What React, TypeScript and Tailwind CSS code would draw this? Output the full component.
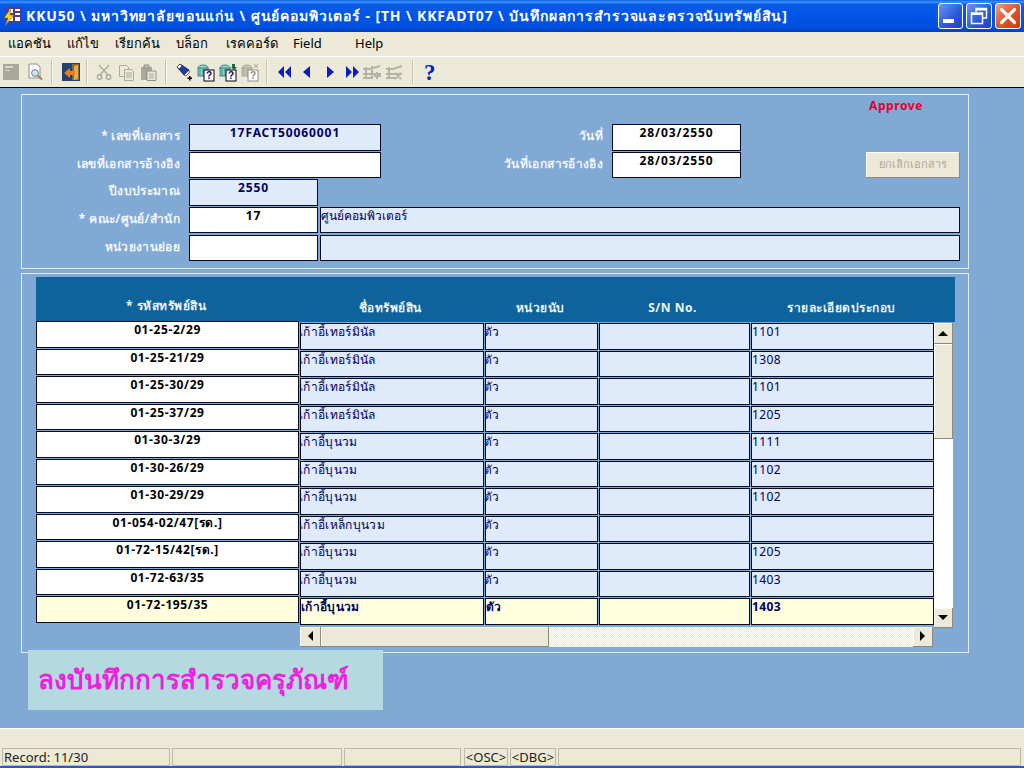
import type { ReactNode } from "react";

const rows = [
  { code: "01-25-2/29", name: "เก้าอี้เทอร์มินัล", detail: "1101" },
  { code: "01-25-21/29", name: "เก้าอี้เทอร์มินัล", detail: "1308" },
  { code: "01-25-30/29", name: "เก้าอี้เทอร์มินัล", detail: "1101" },
  { code: "01-25-37/29", name: "เก้าอี้เทอร์มินัล", detail: "1205" },
  { code: "01-30-3/29", name: "เก้าอี้บุนวม", detail: "1111" },
  { code: "01-30-26/29", name: "เก้าอี้บุนวม", detail: "1102" },
  { code: "01-30-29/29", name: "เก้าอี้บุนวม", detail: "1102" },
  { code: "01-054-02/47[รด.]", name: "เก้าอี้เหล็กบุนวม", detail: "" },
  { code: "01-72-15/42[รด.]", name: "เก้าอี้บุนวม", detail: "1205" },
  { code: "01-72-63/35", name: "เก้าอี้บุนวม", detail: "1403" },
  { code: "01-72-195/35", name: "เก้าอี้บุนวม", detail: "1403", current: true },
];

const menus = [
  { label: "แอคชัน", w: "w-[59px]" },
  { label: "แก้ไข", w: "w-[48px]" },
  { label: "เรียกค้น", w: "w-[61px]" },
  { label: "บล็อก", w: "w-[50px]" },
  { label: "เรคคอร์ด", w: "w-[67px]" },
  { label: "Field", w: "w-[62px]" },
  { label: "Help", w: "w-[40px]" },
];

function Field({ w, tone, children, align = "center" }: { w: string; tone: "white" | "blue"; children?: ReactNode; align?: "center" | "left" }) {
  return (
    <div
      className={`${w} h-full shrink-0 border border-[#050a20] leading-[15px] text-[12px] ${tone === "white" ? "bg-white text-black" : "bg-[#dfeafa] text-[#00005e]"} ${
        align === "center" ? "text-center font-bold tracking-[0.9px]" : "text-left"
      }`}
    >
      {children}
    </div>
  );
}

function Label({ w, children }: { w: string; children?: ReactNode }) {
  return <div className={`${w} shrink-0 pr-[9px] pt-[1px] text-right text-[12px] font-bold tracking-[0.35px] text-[#f3f6fb] leading-[22px]`}>{children}</div>;
}

function Sep() {
  return <div className="h-[24px] w-[2px] shrink-0 border-l border-[#c5c2b0] bg-white/60" />;
}

function Arrow({ dir }: { dir: "up" | "down" | "left" | "right" }) {
  if (dir === "up" || dir === "down") {
    return (
      <svg width="10" height="5" viewBox="0 0 10 5">
        <polygon points={dir === "up" ? "0,5 5,0 10,5" : "0,0 5,5 10,0"} fill="#000" />
      </svg>
    );
  }
  return (
    <svg width="5" height="10" viewBox="0 0 5 10">
      <polygon points={dir === "left" ? "5,0 0,5 5,10" : "0,0 5,5 0,10"} fill="#000" />
    </svg>
  );
}

function ScrollBtn({ dir, cls }: { dir: "up" | "down" | "left" | "right"; cls: string }) {
  return (
    <div className={`${cls} flex shrink-0 items-center justify-center border-r border-b border-[#8c8a7c] bg-[#ece9d8] shadow-[inset_1px_1px_0_#fff]`}>
      <Arrow dir={dir} />
    </div>
  );
}

function Query({ x, disabled }: { x?: boolean; disabled?: boolean }) {
  const a = disabled ? "#a8a79c" : "#2f8f8a";
  const b = disabled ? "#c9c7b8" : "#9fd0cf";
  const q = disabled ? "#8f8e84" : "#000";
  return (
    <svg width="19" height="19" viewBox="0 0 19 19" className="shrink-0">
      <ellipse cx="6" cy="5" rx="5" ry="3" fill={b} stroke={a} />
      <rect x="1" y="5" width="10" height="8" fill={b} stroke={a} />
      <path d="M3 5v8M6 5v8M9 5v8" stroke={a} />
      <rect x="7" y="7" width="10" height="11" fill="#fff" stroke={q} />
      <text x="12" y="16" textAnchor="middle" fontSize="10" fontWeight="700" fill={disabled ? "#8f8e84" : "#000080"} fontFamily="Liberation Sans">?</text>
      {x && !disabled && <path d="M13 1h3v3h2l-3 3-3-3h1z" fill="#1a6b3a" />}
      {x && disabled && <path d="M13 1l4 4M17 1l-4 4" stroke="#a8a79c" />}
    </svg>
  );
}

function Toolbar() {
  return (
    <div className="flex h-[31px] shrink-0 items-center border-b border-black bg-[#ece9d8] pl-[3px]">
      <svg width="16" height="16" viewBox="0 0 16 16" className="shrink-0">
        <rect width="16" height="16" rx="1" fill="#a9a899" />
        <path d="M2 2h8v2H2zM2 6h5v1H2z" fill="#d8d6c8" />
      </svg>
      <svg width="18" height="18" viewBox="0 0 18 18" className="ml-[7px] shrink-0">
        <path d="M3 1h8l3 3v11H3z" fill="#fff" stroke="#8e8e8e" />
        <circle cx="9" cy="10" r="3.4" fill="#cfe4f6" stroke="#6a7c92" />
        <path d="M11.5 12.5l4.5 4" stroke="#b0813c" strokeWidth="2" />
      </svg>
      <div className="ml-[7px]"><Sep /></div>
      <svg width="18" height="18" viewBox="0 0 18 18" className="ml-[9px] shrink-0">
        <rect width="18" height="18" fill="#24406e" />
        <path d="M10 1h7v16h-7z" fill="#8a6a30" />
        <path d="M12 3l4-1v14l-4 1z" fill="#e0b050" />
        <path d="M2 10l6-5v3h5v4H8v3z" fill="#f07a20" />
      </svg>
      <div className="ml-[6px]"><Sep /></div>
      <svg width="16" height="16" viewBox="0 0 16 16" className="ml-[8px] shrink-0" fill="none" stroke="#aaa99b" strokeWidth="1.4">
        <path d="M3 1l9 10M13 1L4 11" />
        <circle cx="3.5" cy="13" r="2.2" />
        <circle cx="12.5" cy="13" r="2.2" />
      </svg>
      <svg width="17" height="17" viewBox="0 0 17 17" className="ml-[6px] shrink-0" fill="#ece9d8" stroke="#aaa99b">
        <path d="M1.5 1.5h7l2 2v9h-9z" />
        <path d="M6.5 5.5h7l2 2v9h-9z" />
        <path d="M8 9h6M8 11h6M8 13h6" />
      </svg>
      <svg width="17" height="17" viewBox="0 0 17 17" className="ml-[5px] shrink-0">
        <path d="M1 3h11v13H1z" fill="#aaa99b" />
        <path d="M4 1h5v3H4z" fill="#c6c4b4" stroke="#8f8e84" />
        <path d="M7 7h9v9.500H7z" fill="#ece9d8" stroke="#8f8e84" />
        <path d="M9 10h5M9 12h5M9 14h5" stroke="#aaa99b" />
      </svg>
      <div className="ml-[8px]"><Sep /></div>
      <svg width="17" height="18" viewBox="0 0 17 18" className="ml-[9px] shrink-0">
        <path d="M4 1l-3 3 7 8 5-5z" fill="#1f3fb0" stroke="#000" strokeWidth="0.7" />
        <path d="M4 1l-3 3 2 2 3-3z" fill="#f4f6ff" stroke="#000" strokeWidth="0.5" />
        <path d="M8 12l5-5 1 2-4 4z" fill="#e8e8e8" stroke="#000" strokeWidth="0.5" />
        <path d="M13 13h1.500v1.500H16V16h-1.500v1.500H13V16h-1.500v-1.500H13z" fill="#000" />
      </svg>
      <div className="ml-[4px]"><Query /></div>
      <div className="ml-[3px]"><Query x /></div>
      <div className="ml-[3px]"><Query x disabled /></div>
      <div className="ml-[6px]"><Sep /></div>
      <svg width="13" height="14" viewBox="0 0 13 14" className="ml-[10px] shrink-0" fill="#0a1fb8">
        <path d="M6 1v12L0 7zM13 1v12L7 7z" />
      </svg>
      <svg width="9" height="14" viewBox="0 0 9 14" className="ml-[11px] shrink-0" fill="#0a1fb8">
        <path d="M8 1v12L1 7z" />
      </svg>
      <svg width="9" height="14" viewBox="0 0 9 14" className="ml-[15px] shrink-0" fill="#0a1fb8">
        <path d="M1 1v12l7-6z" />
      </svg>
      <svg width="13" height="14" viewBox="0 0 13 14" className="ml-[11px] shrink-0" fill="#0a1fb8">
        <path d="M0 1v12l6-6zM7 1v12l6-6z" />
      </svg>
      <svg width="20" height="16" viewBox="0 0 20 16" className="ml-[3px] shrink-0" fill="none" stroke="#b4b3a5" strokeWidth="2">
        <path d="M1 5h7l10-3M1 10h18M1 14h10M4 3v12M10 2v13M15 8v7M12 12h7" />
      </svg>
      <svg width="18" height="16" viewBox="0 0 18 16" className="ml-[3px] shrink-0" fill="none" stroke="#b4b3a5" strokeWidth="2">
        <path d="M1 5h7l9-3M1 10h16M1 14h9M4 3v12M10 9l6 6M16 9l-6 6" />
      </svg>
      <div className="ml-[9px]"><Sep /></div>
      <span className="ml-[10px] font-['Liberation_Serif',serif] text-[23px] font-bold leading-none text-[#0a1fb8]">?</span>
    </div>
  );
}

export default function App() {
  return (
    <div className="flex h-[768px] w-[1024px] flex-col overflow-hidden bg-[#81a9d6] font-['Noto_Sans','Liberation_Sans',sans-serif]">
      {/* title bar */}
      <div className="flex h-[32px] shrink-0 items-center bg-[linear-gradient(180deg,#0a5fe6_0%,#3b96ff_6%,#0a5ce8_14%,#0054e6_50%,#0050e0_85%,#0040c0_100%)] pl-[3px] pr-[3px]">
        <svg width="19" height="21" viewBox="0 0 19 21" className="shrink-0">
          <rect x="3" y="1" width="16" height="16" fill="#4a3a9a" />
          <path d="M6 3h4v4H6zM12 3h5v2h-5zM12 7h5v2h-5zM6 10h4v5H6zM12 11h5v4h-5z" fill="#fff" />
          <path d="M8 2L1 12h4l-3 8 9-11H7z" fill="#ffd21f" stroke="#7a5b00" strokeWidth="0.5" />
        </svg>
        <div className="ml-[4px] flex-1 whitespace-nowrap text-[14px] font-bold leading-none tracking-[0.86px] text-white">
          KKU50 \ มหาวิทยาลัยขอนแก่น \ ศูนย์คอมพิวเตอร์ - [TH \ KKFADT07 \ บันทึกผลการสำรวจและตรวจนับทรัพย์สิน]
        </div>
        <div className="flex h-[26px] w-[25px] items-end rounded-[3px] border border-white bg-[linear-gradient(135deg,#6f93f0,#2a57d8_60%,#1c45c4)] pb-[5px] pl-[4px]">
          <div className="h-[4px] w-[11px] bg-white" />
        </div>
        <div className="ml-[3px] flex h-[26px] w-[26px] items-center justify-center rounded-[3px] border border-white bg-[linear-gradient(135deg,#6f93f0,#2a57d8_60%,#1c45c4)]">
          <svg width="18" height="18" viewBox="0 0 18 18" fill="none" stroke="#fff">
            <path d="M6 5V1.500h10.500V11H13" strokeWidth="1.500" />
            <path d="M6 2.500h10" strokeWidth="2" />
            <rect x="1.500" y="6" width="11" height="10.500" strokeWidth="1.500" />
            <path d="M1.500 7h11" strokeWidth="2" />
          </svg>
        </div>
        <div className="ml-[3px] flex h-[26px] w-[26px] items-center justify-center rounded-[3px] border border-white bg-[linear-gradient(135deg,#f0a080,#e0552c_50%,#c83a14)]">
          <svg width="18" height="18" viewBox="0 0 18 18" stroke="#fff" strokeWidth="3.200" strokeLinecap="round">
            <path d="M2.500 2.500l13 13M15.500 2.500l-13 13" />
          </svg>
        </div>
      </div>

      {/* menu */}
      <div className="flex h-[25px] shrink-0 items-center border-b border-white bg-[#ece9d8] pl-[8px] text-[13px] text-black">
        {menus.map((m) => (
          <span key={m.label} className={`${m.w} shrink-0`}>
            {m.label}
          </span>
        ))}
      </div>

      <Toolbar />

      {/* form */}
      <div className="flex flex-1 flex-col pl-[21px] pt-[6px]">
        <div className="h-[175px] w-[948px] shrink-0 border border-[#e4edf7] pt-[4px]">
          <div className="h-[25px] pl-[847px] text-[12px] font-bold leading-[14px] tracking-[0.6px] text-[#e00030]">Approve</div>
          <div className="flex h-[27px]">
            <Label w="w-[167px]">* เลขที่เอกสาร</Label>
            <Field w="w-[192px]" tone="blue">17FACT50060001</Field>
            <Label w="w-[231px]">วันที่</Label>
            <Field w="w-[129px]" tone="white">28/03/2550</Field>
          </div>
          <div className="mt-[1px] flex h-[26px]">
            <Label w="w-[167px]">เลขที่เอกสารอ้างอิง</Label>
            <Field w="w-[192px]" tone="white" />
            <Label w="w-[231px]">วันที่เอกสารอ้างอิง</Label>
            <Field w="w-[129px]" tone="white">28/03/2550</Field>
            <div className="ml-[125px] flex h-full w-[94px] items-center justify-center border-r border-b border-[#8c8a7c] bg-[#ece9d8] text-[11px] text-[#aca899] shadow-[inset_1px_1px_0_#fff]">
              ยกเลิกเอกสาร
            </div>
          </div>
          <div className="mt-[1px] flex h-[27px]">
            <Label w="w-[167px]">ปีงบประมาณ</Label>
            <Field w="w-[129px]" tone="blue">2550</Field>
          </div>
          <div className="mt-[1px] flex h-[26px]">
            <Label w="w-[167px]">* คณะ/ศูนย์/สำนัก</Label>
            <Field w="w-[129px]" tone="white">17</Field>
            <div className="ml-[2px]">
              <Field w="w-[640px]" tone="blue" align="left">ศูนย์คอมพิวเตอร์</Field>
            </div>
          </div>
          <div className="mt-[2px] flex h-[26px]">
            <Label w="w-[167px]">หน่วยงานย่อย</Label>
            <Field w="w-[129px]" tone="white" />
            <div className="ml-[2px]">
              <Field w="w-[640px]" tone="blue" align="left" />
            </div>
          </div>
        </div>

        <div className="mt-[4px] h-[380px] w-[948px] shrink-0 border border-[#e4edf7] pl-[14px] pt-[3px]">
          {/* table header */}
          <div className="flex h-[45px] w-[919px] bg-[#0f639c] text-center text-[12px] font-bold tracking-[0.5px] text-[#eef3f8]">
            <div className="w-[264px] pr-[4px] pt-[20px]">* รหัสทรัพย์สิน</div>
            <div className="w-[185px] pr-[5px] pt-[22px]">ชื่อทรัพย์สิน</div>
            <div className="w-[114px] pr-[4px] pt-[22px]">หน่วยนับ</div>
            <div className="w-[152px] pr-[5px] pt-[22px]">S/N No.</div>
            <div className="w-[183px] pr-[2px] pt-[22px]">รายละเอียดประกอบ</div>
          </div>
          <div className="flex">
            {/* locked code column */}
            <div className="-mt-[1px] flex w-[264px] shrink-0 flex-col">
              {rows.map((r) => (
                <div
                  key={r.code}
                  className={`mb-[1px] h-[26.5px] w-[263px] border border-[#050a20] text-center text-[12px] font-bold leading-[16px] tracking-[0.6px] text-black ${r.current ? "bg-[#ffffe0]" : "bg-white"}`}
                >
                  {r.code}
                </div>
              ))}
            </div>
            <div className="flex flex-col">
              <div className="mt-[1px] flex">
                <div className="flex w-[634px] flex-col">
                  {rows.map((r) => {
                    const tone = r.current ? "bg-[#ffffe0] font-bold" : "bg-[#dfeafa] indent-[-2px]";
                    return (
                      <div key={r.code} className="mb-[1px] flex h-[26.5px] gap-[1px] text-[12px] leading-[16px] tracking-[0.35px] text-[#00005e]">
                        <div className={`w-[184px] overflow-hidden border border-[#050a20] ${tone}`}>{r.name}</div>
                        <div className={`w-[113px] overflow-hidden border border-[#050a20] ${tone}`}>ตัว</div>
                        <div className={`w-[151px] border border-[#050a20] ${tone}`} />
                        <div className={`w-[183px] border border-[#050a20] ${r.current ? "bg-[#ffffe0] font-bold" : "bg-[#dfeafa]"}`}>{r.detail}</div>
                      </div>
                    );
                  })}
                </div>
                <div className="-mb-[2px] flex w-[19px] flex-col bg-white">
                  <ScrollBtn dir="up" cls="h-[21px]" />
                  <div className="h-[95px] border-r border-b border-[#8c8a7c] bg-[#ece9d8] shadow-[inset_1px_1px_0_#fff]" />
                  <div className="flex-1" />
                  <ScrollBtn dir="down" cls="h-[20px]" />
                </div>
              </div>
              <div className="mt-[1px] flex h-[20px] w-[633px]">
                <ScrollBtn dir="left" cls="w-[21px]" />
                <div className="w-[228px] border-r border-b border-[#8c8a7c] bg-[#ece9d8] shadow-[inset_1px_1px_0_#fff]" />
                <div className="flex-1 bg-[repeating-conic-gradient(#ece9d8_0_25%,#ffffff_0_50%)] bg-[length:2px_2px]" />
                <ScrollBtn dir="right" cls="w-[20px]" />
              </div>
            </div>
          </div>
        </div>

        <div className="relative -mt-[3px] ml-[7px] flex h-[60px] w-[355px] shrink-0 items-center whitespace-nowrap bg-[#b5d9e0] pl-[10px] font-['Liberation_Serif',serif] text-[26px] font-bold text-[#f01fe0]">
          ลงบันทึกการสำรวจครุภัณฑ์
        </div>
      </div>

      {/* status */}
      <div className="flex h-[40px] shrink-0 flex-col border-t border-white bg-[#ece9d8]">
        <div className="mt-[19px] flex h-[18px] flex-none gap-[2px] pl-[2px] text-[13px] leading-[17px] text-[#222]">
          <div className="w-[168px] border border-[#bdbaa8] pl-[1px]">Record: 11/30</div>
          <div className="w-[170px] border border-[#bdbaa8]" />
          <div className="w-[117px] border border-[#bdbaa8]" />
          <div className="ml-[1px] w-[44px] border border-[#bdbaa8] text-center">&lt;OSC&gt;</div>
          <div className="w-[46px] border border-[#bdbaa8] text-center">&lt;DBG&gt;</div>
          <div className="w-[463px] border border-[#bdbaa8]" />
        </div>
        <div className="h-[2px] bg-[#1f5fc8]" />
      </div>
    </div>
  );
}
